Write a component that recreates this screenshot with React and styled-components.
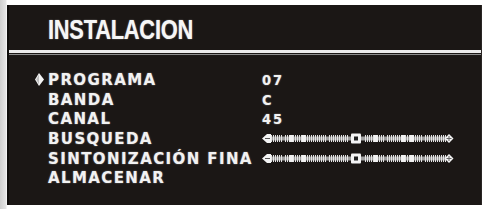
import React from 'react'
import styled, { createGlobalStyle } from 'styled-components'

const GlobalStyle = createGlobalStyle`
  html, body {
    margin: 0;
    padding: 0;
    background: #ffffff;
  }
  body {
    font-family: "Liberation Sans", Arial, sans-serif;
  }
`

const items = [
  { label: 'PROGRAMA', value: '07', active: true },
  { label: 'BANDA', value: 'C' },
  { label: 'CANAL', value: '45' },
  { label: 'BUSQUEDA', slider: 0.5 },
  { label: 'SINTONIZACIÓN FINA', slider: 0.5 },
  { label: 'ALMACENAR' },
]

// tick marks on the track, in groups like the OSD bar
const ticks = []
for (let x = 9; x < 184; x += 2) {
  if (x > 86 && x < 102) continue
  if ((x > 20 && x < 23) || (x > 64 && x < 67) || (x > 122 && x < 125) || (x > 160 && x < 163)) continue
  ticks.push(x)
}
const blocks = [27, 40, 112, 139, 148]

const Pointer = () => (
  <svg width="9" height="13" viewBox="0 0 9 13">
    <path d="M4 0 L9 6.5 L4 13 L0 6.5 Z" fill="#f4f4f4" />
    <path d="M4 1.5 L1.2 6.5 L4 11.5 Z" fill="#bdbdbd" />
  </svg>
)

const Slider = ({ value }) => {
  const thumb = 6 + value * 174
  return (
    <svg width="192" height="11" viewBox="0 0 192 11">
      <rect x="7" y="3.5" width="176" height="4" fill="#a0a0a0" />
      {ticks.map((x) => (
        <rect key={x} x={x} y="2" width="1" height="7" fill="#e4e4e4" />
      ))}
      {blocks.map((x) => (
        <rect key={'b' + x} x={x} y="2" width="4" height="7" fill="#f0f0f0" />
      ))}
      <path d="M0 5.5 L5 1 L9 1 L9 10 L5 10 Z" fill="#f4f4f4" />
      <rect x="3" y="5" width="5" height="1" fill="#555" />
      <rect x={thumb - 4} y="0.5" width="10" height="10" rx="1" fill="#f4f4f4" />
      <rect x={thumb - 1} y="3.5" width="4" height="4" fill="#222" />
      <path d="M187 1 L191.5 5.5 L187 10 L182.5 5.5 Z" fill="#f4f4f4" />
      <rect x="184.5" y="5" width="5" height="1" fill="#666" />
      <rect x="186.5" y="3" width="1" height="5" fill="#666" />
    </svg>
  )
}

export default function App() {
  return (
    <>
      <GlobalStyle />
      <Screen>
        <Panel>
          <Header>
            <Title>INSTALACION</Title>
          </Header>
          <Divider />
          <Menu>
            {items.map((item) => (
              <Row key={item.label}>
                <Marker>{item.active && <Pointer />}</Marker>
                <Label>{item.label}</Label>
                <Value>
                  {item.slider !== undefined ? <Slider value={item.slider} /> : item.value}
                </Value>
              </Row>
            ))}
          </Menu>
        </Panel>
      </Screen>
    </>
  )
}

const Screen = styled.div`
  width: 487px;
  height: 209px;
  padding: 5px 5px 4px 7px;
  box-sizing: border-box;
  background: linear-gradient(to right, #cfcfcf 0, #e6e6e6 6px, #ffffff 7px);
`

const Panel = styled.div`
  width: 475px;
  height: 200px;
  background: #1b1715;
  border-left: 2px solid #0e0c0b;
  border-right: 1px solid #2a2624;
  box-sizing: border-box;
  display: flex;
  flex-direction: column;
`

const Header = styled.div`
  height: 45px;
  display: flex;
  align-items: center;
  padding-left: 39px;
  padding-top: 4px;
  box-sizing: border-box;
`

/* the OSD title face is a narrow grotesque; squeeze Arial-metric bold to match */
const Title = styled.h1`
  margin: 0;
  font-family: "Liberation Sans", Arial, sans-serif;
  font-weight: bold;
  font-size: 28px;
  letter-spacing: -0.3px;
  color: #f6f6f6;
  transform: scaleX(0.78);
  transform-origin: left center;
  text-shadow: 0 0 1.5px rgba(255, 255, 255, 0.6);
`

const Divider = styled.div`
  height: 1px;
  border-top: 3px solid #ececec;
  border-bottom: 1px solid #8d8d8d;
`

const Menu = styled.div`
  padding-top: 15px;
  padding-left: 26px;
  display: flex;
  flex-direction: column;
`

const Row = styled.div`
  display: grid;
  grid-template-columns: 13px 214px 1fr;
  align-items: center;
  height: 19.7px;
`

const Marker = styled.div`
  display: flex;
  align-items: center;
  svg {
    display: block;
  }
`

const Label = styled.span`
  font-family: "DejaVu Sans", "Liberation Sans", sans-serif;
  font-weight: bold;
  font-size: 15px;
  letter-spacing: 1.4px;
  color: #f2f2f2;
  white-space: nowrap;
  text-shadow: 0 0 1.5px rgba(255, 255, 255, 0.55);
`

const Value = styled.span`
  display: flex;
  align-items: center;
  font-family: "DejaVu Sans Condensed", "DejaVu Sans", sans-serif;
  font-weight: bold;
  font-size: 14.5px;
  letter-spacing: 2px;
  color: #f2f2f2;
  text-shadow: 0 0 1.5px rgba(255, 255, 255, 0.55);
  svg {
    display: block;
  }
`
